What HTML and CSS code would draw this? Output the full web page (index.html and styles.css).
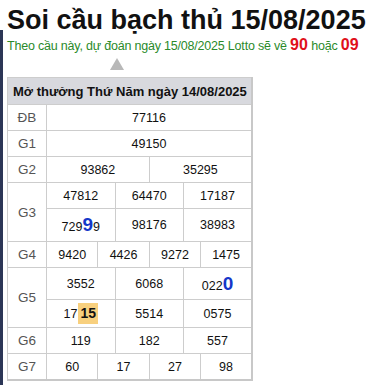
FILE: index.html
```html
<!DOCTYPE html>
<html lang="vi">
<head>
<meta charset="utf-8">
<link rel="stylesheet" href="styles.css">
</head>
<body>
<h1 class="title">Soi cầu bạch thủ 15/08/2025</h1>
<div class="content">
  <p class="predict">Theo cầu này, dự đoán ngày 15/08/2025 Lotto sẽ về <b class="red">90</b> hoặc <b class="red">09</b></p>
  <div class="arrow"></div>
  <table class="kq">
    <colgroup>
      <col class="c-label">
      <col><col><col><col><col><col><col><col><col><col><col><col>
    </colgroup>
    <tr class="r-head"><th colspan="13">Mở thưởng Thứ Năm ngày 14/08/2025</th></tr>
    <tr class="r-std"><td class="lbl">ĐB</td><td colspan="12">77116</td></tr>
    <tr class="r-std"><td class="lbl">G1</td><td colspan="12">49150</td></tr>
    <tr class="r-std"><td class="lbl">G2</td><td colspan="6">93862</td><td colspan="6">35295</td></tr>
    <tr class="r-std"><td class="lbl" rowspan="2">G3</td><td colspan="4">47812</td><td colspan="4">64470</td><td colspan="4">17187</td></tr>
    <tr class="r-big"><td colspan="4">729<b class="blue">9</b>9</td><td colspan="4">98176</td><td colspan="4">38983</td></tr>
    <tr class="r-std"><td class="lbl">G4</td><td colspan="3">9420</td><td colspan="3">4426</td><td colspan="3">9272</td><td colspan="3">1475</td></tr>
    <tr class="r-big2"><td class="lbl" rowspan="2">G5</td><td colspan="4">3552</td><td colspan="4">6068</td><td colspan="4">022<b class="blue">0</b></td></tr>
    <tr class="r-hl"><td colspan="4">17<b class="hl">15</b></td><td colspan="4">5514</td><td colspan="4">0575</td></tr>
    <tr class="r-std"><td class="lbl">G6</td><td colspan="4">119</td><td colspan="4">182</td><td colspan="4">557</td></tr>
    <tr class="r-std"><td class="lbl">G7</td><td colspan="3">60</td><td colspan="3">17</td><td colspan="3">27</td><td colspan="3">98</td></tr>
  </table>
</div>
</body>
</html>
```
FILE: styles.css
```css
html, body {
  margin: 0;
  padding: 0;
  background: #fff;
  font-family: "Liberation Sans", Arial, sans-serif;
  overflow: hidden;
}
.title {
  margin: 10px 0 0 7px;
  font-size: 27px;
  line-height: 20px;
  font-weight: bold;
  color: #111;
  white-space: nowrap;
}
.content {
  border-left: 3px solid #2c3656;
  padding-left: 4px;
  height: 360px;
}
.predict {
  margin: 0;
  padding-top: 7px;
  font-size: 12.5px;
  line-height: 16px;
  color: #2a8a2a;
  white-space: nowrap;
  letter-spacing: -0.2px;
}
.red {
  color: #e0101a;
  font-size: 16px;
  letter-spacing: 0;
}
.arrow {
  width: 0;
  height: 0;
  margin: 4px 0 0 103px;
  border-left: 7px solid transparent;
  border-right: 7px solid transparent;
  border-bottom: 12px solid #b8b8b8;
}
.kq {
  margin-top: 7px;
  width: 246px;
  table-layout: fixed;
  border-collapse: collapse;
  border: 2px solid #c8c8c8;
  border-top-width: 1px;
  border-left-width: 1px;
  font-size: 12.5px;
  color: #111;
}
.c-label { width: 39px; }
.kq th, .kq td {
  border: 1px solid #cdcdcd;
  text-align: center;
  padding: 0;
  white-space: nowrap;
}
.kq th {
  background: #d8d9de;
  font-size: 13px;
  font-weight: bold;
  text-align: left;
  padding-left: 5px;
  height: 26px;
  color: #111;
}
.kq td.lbl {
  color: #555;
  font-size: 13.5px;
}
.r-std td { height: 25px; }
.r-big td { height: 32px; }
.r-big2 td { height: 31px; }
.r-hl td { height: 27px; }
.blue {
  color: #1537c9;
  font-size: 19px;
}
.hl {
  display: inline-block;
  background: #f8d07e;
  font-size: 14px;
  line-height: 21px;
  padding: 0 2px;
  margin-left: 1px;
  color: #111;
}
```
